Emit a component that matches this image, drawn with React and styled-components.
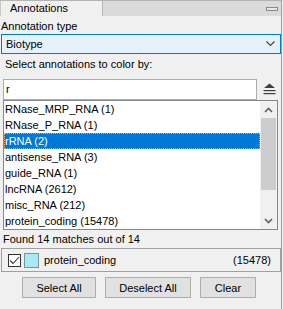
import React from 'react';
import styled, { createGlobalStyle } from 'styled-components';

const Global = createGlobalStyle`
  html, body {
    margin: 0;
    padding: 0;
    background: #f0f0f0;
  }
  body {
    font-family: "Liberation Sans", Arial, sans-serif;
    font-size: 11px;
    color: #000;
  }
`;

const Frame = styled.div`
  width: 282px;
  height: 309px;
  box-sizing: border-box;
  border-right: 1px solid #a0a0a0;
  background: #f0f0f0;
  display: flex;
  flex-direction: column;
`;

const TitleBar = styled.div`
  height: 16px;
  box-sizing: border-box;
  border-top: 1px solid #b4b4b4;
  background: #dadada;
  display: flex;
  align-items: stretch;
  justify-content: space-between;
`;

const Tab = styled.div`
  width: 103px;
  box-sizing: border-box;
  background: #f0f0f0;
  border-left: 1px solid #c8c8c8;
  border-right: 1px solid #b8b8b8;
  padding-left: 9px;
  line-height: 15px;
`;

const Minimize = styled.div`
  width: 10px;
  height: 2px;
  border: 1px solid #8a8a8a;
  background: #e8e8e8;
  margin: 6px 3px 0 0;
`;

const Label = styled.div`
  height: ${p => p.$h}px;
  line-height: ${p => p.$lh}px;
  padding-left: ${p => p.$left || 2}px;
  box-sizing: border-box;
  white-space: nowrap;
`;

const Combo = styled.div`
  margin-left: 1px;
  width: 280px;
  height: 20px;
  box-sizing: border-box;
  border: 1px solid #0078d7;
  background: #e5f1fb;
  display: flex;
  align-items: center;
  justify-content: space-between;
  padding: 0 5px 0 4px;
`;

const SearchRow = styled.div`
  display: flex;
  align-items: center;
  height: 22px;
  padding-left: 3px;
  gap: 6px;
`;

const SearchInput = styled.div`
  width: 254px;
  height: 21px;
  box-sizing: border-box;
  border: 1px solid #adadad;
  background: #fff;
  padding-left: 2px;
  line-height: 19px;
`;

const List = styled.div`
  margin-left: 3px;
  width: 275px;
  height: 130px;
  box-sizing: border-box;
  border: 1px solid #828790;
  background: #fff;
  display: flex;
`;

const Rows = styled.div`
  flex: 1;
  display: flex;
  flex-direction: column;
`;

const Row = styled.div`
  height: 16px;
  box-sizing: border-box;
  white-space: nowrap;
  background: ${p => (p.$sel ? '#0078d7' : 'transparent')};
  color: ${p => (p.$sel ? '#fff' : '#000')};
  border: 1px dotted ${p => (p.$sel ? '#f3a35a' : 'transparent')};
  line-height: 14px;
`;

const ScrollBar = styled.div`
  width: 17px;
  background: #f0f0f0;
  display: flex;
  flex-direction: column;
`;

const Arrow = styled.div`
  height: 17px;
  display: flex;
  align-items: center;
  justify-content: center;
`;

const Track = styled.div`
  flex: 1;
  display: flex;
  flex-direction: column;
`;

const Thumb = styled.div`
  height: 72px;
  margin: 0 1px;
  background: #cdcdcd;
`;

const Selected = styled.div`
  margin-left: 1px;
  width: 280px;
  height: 24px;
  box-sizing: border-box;
  border: 1px solid #a0a0a0;
  display: flex;
  align-items: center;
  padding: 0 9px 0 6px;
`;

const Check = styled.div`
  width: 13px;
  height: 13px;
  box-sizing: border-box;
  border: 1px solid #333;
  background: #fff;
  display: flex;
  align-items: center;
  justify-content: center;
`;

const Swatch = styled.div`
  width: 15px;
  height: 15px;
  box-sizing: border-box;
  margin-left: 3px;
  border: 1px solid #6f9aa3;
  background: ${p => p.$c};
`;

const Name = styled.div`
  margin-left: 5px;
  flex: 1;
`;

const Buttons = styled.div`
  display: flex;
  justify-content: center;
  gap: 9px;
  margin-top: 5px;
  padding-right: 3px;
`;

const Button = styled.div`
  width: ${p => p.$w}px;
  height: 21px;
  box-sizing: border-box;
  border: 1px solid #adadad;
  background: #e1e1e1;
  display: flex;
  align-items: center;
  justify-content: center;
`;

const items = [
  'RNase_MRP_RNA (1)',
  'RNase_P_RNA (1)',
  'rRNA (2)',
  'antisense_RNA (3)',
  'guide_RNA (1)',
  'lncRNA (2612)',
  'misc_RNA (212)',
  'protein_coding (15478)',
];

const Chevron = ({ up }) => (
  <svg width="9" height="6" viewBox="0 0 9 6">
    <polyline
      points={up ? '1,5 4.5,1.5 8,5' : '1,1 4.5,4.5 8,1'}
      fill="none"
      stroke="#606060"
      strokeWidth="1.6"
    />
  </svg>
);

export default function App() {
  return (
    <>
      <Global />
      <Frame>
        <TitleBar>
          <Tab>Annotations</Tab>
          <Minimize />
        </TitleBar>
        <Label $h={18} $lh={20} $left={1}>Annotation type</Label>
        <Combo>
          <span>Biotype</span>
          <svg width="9" height="6" viewBox="0 0 9 6">
            <polyline points="0.5,0.5 4.5,4.5 8.5,0.5" fill="none" stroke="#404040" strokeWidth="1.1" />
          </svg>
        </Combo>
        <Label $h={24} $lh={20} $left={5}>Select annotations to color by:</Label>
        <SearchRow>
          <SearchInput>r</SearchInput>
          <svg width="13" height="12" viewBox="0 0 13 12">
            <polygon points="6.5,0.5 12,5 1,5" fill="#404040" />
            <rect x="0.5" y="7" width="12" height="1.2" fill="#404040" />
            <rect x="0.5" y="10" width="12" height="1.2" fill="#404040" />
          </svg>
        </SearchRow>
        <List>
          <Rows>
            {items.map((t, i) => (
              <Row key={t} $sel={i === 2}>{t}</Row>
            ))}
          </Rows>
          <ScrollBar>
            <Arrow><Chevron up /></Arrow>
            <Track>
              <Thumb />
            </Track>
            <Arrow><Chevron /></Arrow>
          </ScrollBar>
        </List>
        <Label $h={18} $lh={18} $left={3}>Found 14 matches out of 14</Label>
        <Selected>
          <Check>
            <svg width="11" height="9" viewBox="0 0 11 9">
              <polyline points="1,4.5 4,7.5 10,1" fill="none" stroke="#333" strokeWidth="1.1" />
            </svg>
          </Check>
          <Swatch $c="#a9e9f3" />
          <Name>protein_coding</Name>
          <span>(15478)</span>
        </Selected>
        <Buttons>
          <Button $w={74}>Select All</Button>
          <Button $w={86}>Deselect All</Button>
          <Button $w={56}>Clear</Button>
        </Buttons>
      </Frame>
    </>
  );
}
